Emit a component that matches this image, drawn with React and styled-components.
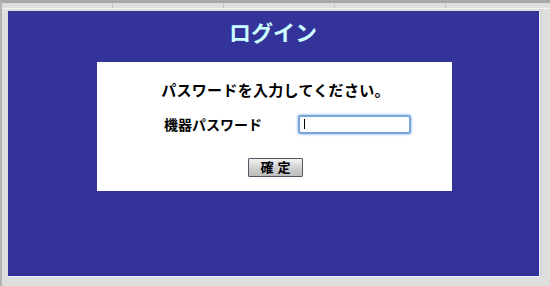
import React from 'react';
import styled, { createGlobalStyle } from 'styled-components';

const GlobalStyle = createGlobalStyle`
    html, body { margin: 0; padding: 0; background: #dedede; }
    body { font-family: "Liberation Sans", "Noto Sans CJK JP", sans-serif; }
`;

const Frame = styled.div`
    width: 550px;
    height: 286px;
    box-sizing: border-box;
    background: #dedede;
    border-top: 3px solid #a9a9a9;
    border-left: 2px solid #b4b4b4;
    padding: 7px 0 0 6px;
    position: relative;
    overflow: hidden;
`;

const Tabs = styled.div`
    display: flex;
    height: 5px;
    margin: -7px 0 2px -6px;
    border-bottom: 1px solid #f4f4f4;
    span {
        width: 110px;
        border-right: 1px solid #c8c8c8;
    }
`;

const Panel = styled.div`
    width: 531px;
    height: 265px;
    box-sizing: border-box;
    background: #333399;
    border-right: 1px solid #2a2aa8;
    border-bottom: 1px solid #2a2aa8;
    box-shadow: 1px 1px 0 #f2f2f2, 3px 0 0 #d6d6d6;
    display: flex;
    flex-direction: column;
`;

const Title = styled.h1`
    margin: 0;
    height: 51px;
    padding-top: 5px;
    box-sizing: border-box;
    text-align: center;
    font-family: "Noto Sans CJK JP", sans-serif;
    font-size: 22px;
    font-weight: 700;
    line-height: 30px;
    color: #ccffff;
`;

const Card = styled.div`
    width: 355px;
    height: 129px;
    margin-left: 89px;
    background: #ffffff;
    display: flex;
    flex-direction: column;
    font-family: "Noto Sans CJK JP", sans-serif;
    color: #000;
`;

const Heading = styled.p`
    margin: 18px 0 0;
    text-align: center;
    font-size: 15px;
    font-weight: 700;
    line-height: 20px;
    letter-spacing: 0.3px;
    padding-left: 2px;
`;

const Row = styled.div`
    display: flex;
    align-items: center;
    margin-top: 15px;
    padding-left: 67px;
    height: 19px;
`;

const Label = styled.label`
    width: 134px;
    font-size: 14px;
    font-weight: 700;
    line-height: 19px;
`;

const Field = styled.div`
    position: relative;
    display: flex;
`;

const Input = styled.input`
    width: 113px;
    height: 19px;
    box-sizing: border-box;
    border: 2px solid #7aa6dc;
    border-radius: 3px;
    box-shadow: 0 0 2px 1px #b4cff0;
    outline: none;
    padding: 0 0 0 3px;
    font-size: 12px;
`;

const Caret = styled.span`
    position: absolute;
    left: 6px;
    top: 4px;
    width: 1px;
    height: 10px;
    background: #000;
`;

const Actions = styled.div`
    display: flex;
    justify-content: center;
    margin-top: 24px;
    padding-left: 1px;
`;

const Button = styled.button`
    width: 55px;
    height: 19px;
    box-sizing: border-box;
    border: 1px solid #555566;
    border-radius: 1px;
    background: linear-gradient(#f2f2f2, #cfcfcf 55%, #bdbdbd);
    font-family: "Noto Sans CJK JP", sans-serif;
    font-size: 13px;
    font-weight: 700;
    line-height: 15px;
    letter-spacing: 1px;
    padding: 0 0 0 2px;
    color: #000;
    display: flex;
    justify-content: center;
    gap: 3px;
`;

const App = () => (
    <>
        <GlobalStyle />
        <Frame>
            <Tabs>
                <span /><span /><span /><span />
            </Tabs>
            <Panel>
                <Title>ログイン</Title>
                <Card>
                    <Heading>パスワードを入力してください。</Heading>
                    <Row>
                        <Label htmlFor="pw">機器パスワード</Label>
                        <Field>
                            <Input id="pw" type="password" />
                            <Caret />
                        </Field>
                    </Row>
                    <Actions>
                        <Button>
                            <span>確</span>
                            <span>定</span>
                        </Button>
                    </Actions>
                </Card>
            </Panel>
        </Frame>
    </>
);

export default App;
